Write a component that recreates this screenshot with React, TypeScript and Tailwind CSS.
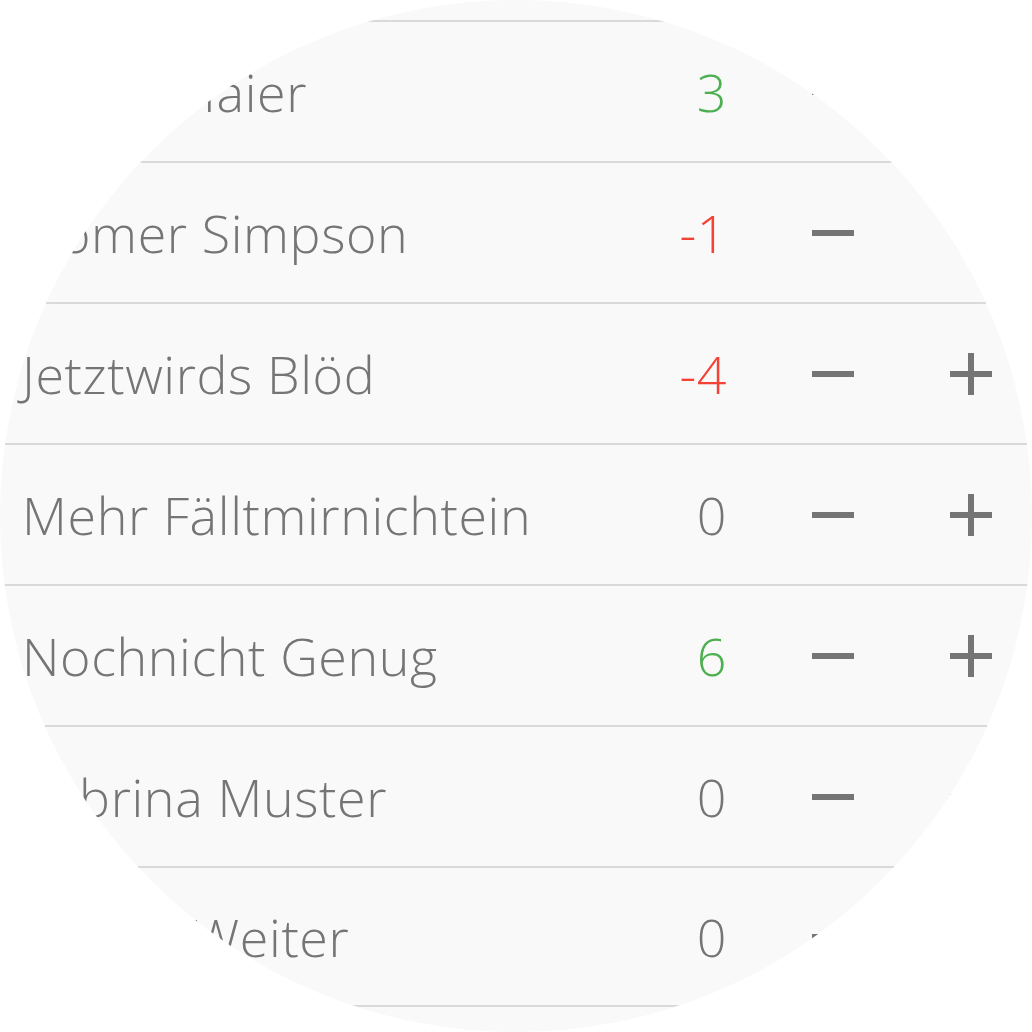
import React from "react";

type Row = { name: string; score: number };

const rows: Row[] = [
  { name: "Maria Maier", score: 3 },
  { name: "Homer Simpson", score: -1 },
  { name: "Jetztwirds Blöd", score: -4 },
  { name: "Mehr Fälltmirnichtein", score: 0 },
  { name: "Nochnicht Genug", score: 6 },
  { name: "Sabrina Muster", score: 0 },
  { name: "Immer Weiter", score: 0 },
];

function Minus() {
  return (
    <svg width="42" height="42" viewBox="0 0 42 42">
      <rect x="0" y="18" width="42" height="6" fill="#757575" />
    </svg>
  );
}

function Plus() {
  return (
    <svg width="42" height="42" viewBox="0 0 42 42">
      <rect x="0" y="18" width="42" height="6" fill="#757575" />
      <rect x="18" y="0" width="6" height="42" fill="#757575" />
    </svg>
  );
}

export default function App() {
  return (
    <div className="w-[1032px] h-[1032px] bg-white">
      <div
        className="w-[1032px] h-[1032px] rounded-full overflow-hidden bg-[#f9f9f9] pt-[20px] flex flex-col"
        style={{ fontFamily: '"Open Sans", "Noto Sans", sans-serif' }}
      >
        {rows.map((r, i) => (
          <div
            key={i}
            className={
              "shrink-0 h-[141px] border-t-2 border-[#dadada] flex items-center text-[52px] font-light tracking-[0.6px] text-[#757575] " +
              (i === rows.length - 1 ? "border-b-2" : "")
            }
          >
            <div className="flex-1 pl-[22px] whitespace-nowrap leading-none">{r.name}</div>
            <div
              className={
                "w-[120px] text-right leading-none " +
                (r.score > 0 ? "text-[#4caf50]" : r.score < 0 ? "text-[#f44336]" : "text-[#757575]")
              }
            >
              {r.score}
            </div>
            <div className="w-[212px] flex justify-center">
              <Minus />
            </div>
            <div className="w-[64px] flex justify-center">
              <Plus />
            </div>
            <div className="w-[29px]" />
          </div>
        ))}
      </div>
    </div>
  );
}
